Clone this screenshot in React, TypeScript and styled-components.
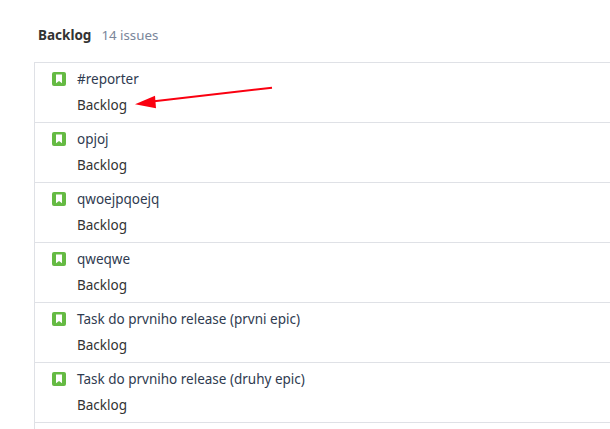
import { createGlobalStyle } from 'styled-components';
import styled from 'styled-components';

const issues = [
    '#reporter',
    'opjoj',
    'qwoejpqoejq',
    'qweqwe',
    'Task do prvniho release (prvni epic)',
    'Task do prvniho release (druhy epic)',
];

function App() {
    return (
        <Page>
            <GlobalStyle />
            <Header>
                <Title>Backlog</Title>
                <Count>14 issues</Count>
            </Header>
            <List>
                {issues.map((summary) => (
                    <Row key={summary}>
                        <StoryIcon viewBox="0 0 14 14">
                            <rect width="14" height="14" rx="2" fill="#65ba43" />
                            <path d="M4 2.5h6v8.8L7 9 4 11.3z" fill="#fff" />
                        </StoryIcon>
                        <Text>
                            <Summary>{summary}</Summary>
                            <Status>Backlog</Status>
                        </Text>
                    </Row>
                ))}
            </List>
            <Arrow viewBox="0 0 160 40">
                <path d="M152 12.7 32 26.5" stroke="#fa0010" strokeWidth="2" fill="none" />
                <path d="M15 29.3 35 20.7 36 33.3z" fill="#fa0010" />
            </Arrow>
        </Page>
    );
}

const GlobalStyle = createGlobalStyle`
    html, body {
        margin: 0;
        background: #fff;
        overflow: hidden;
    }
`;

const Page = styled.div`
    position: relative;
    display: flex;
    flex-direction: column;
    width: 610px;
    height: 429px;
    overflow: hidden;
    padding: 26px 0 0 34px;
    box-sizing: border-box;
    font-family: 'Noto Sans', sans-serif;
    font-size: 13.5px;
    color: #333;
`;

const Header = styled.div`
    display: flex;
    align-items: baseline;
    gap: 10px;
    height: 36px;
    padding-left: 4px;
`;

const Title = styled.span`
    font-weight: 700;
    color: #333;
`;

const Count = styled.span`
    color: #7a869a;
    font-size: 13.3px;
`;

const List = styled.div`
    flex: 1;
    width: 640px;
    border-left: 1px solid #dfe1e6;
    border-top: 1px solid #dfe1e6;
`;

const Row = styled.div`
    display: flex;
    gap: 11px;
    height: 59px;
    padding: 9px 0 0 17px;
    box-sizing: border-box;
    margin-bottom: 1px;
    box-shadow: 0 1px 0 #dfe1e6;
`;

const StoryIcon = styled.svg`
    width: 14px;
    height: 14px;
    flex: none;
`;

const Text = styled.div`
    display: flex;
    flex-direction: column;
    gap: 8px;
    margin-top: -2px;
`;

const Summary = styled.div`
    line-height: 18px;
    color: #2f3b50;
`;

const Status = styled.div`
    line-height: 18px;
    color: #333;
`;

const Arrow = styled.svg`
    position: absolute;
    left: 120px;
    top: 75px;
    width: 160px;
    height: 40px;
`;

export default App;
